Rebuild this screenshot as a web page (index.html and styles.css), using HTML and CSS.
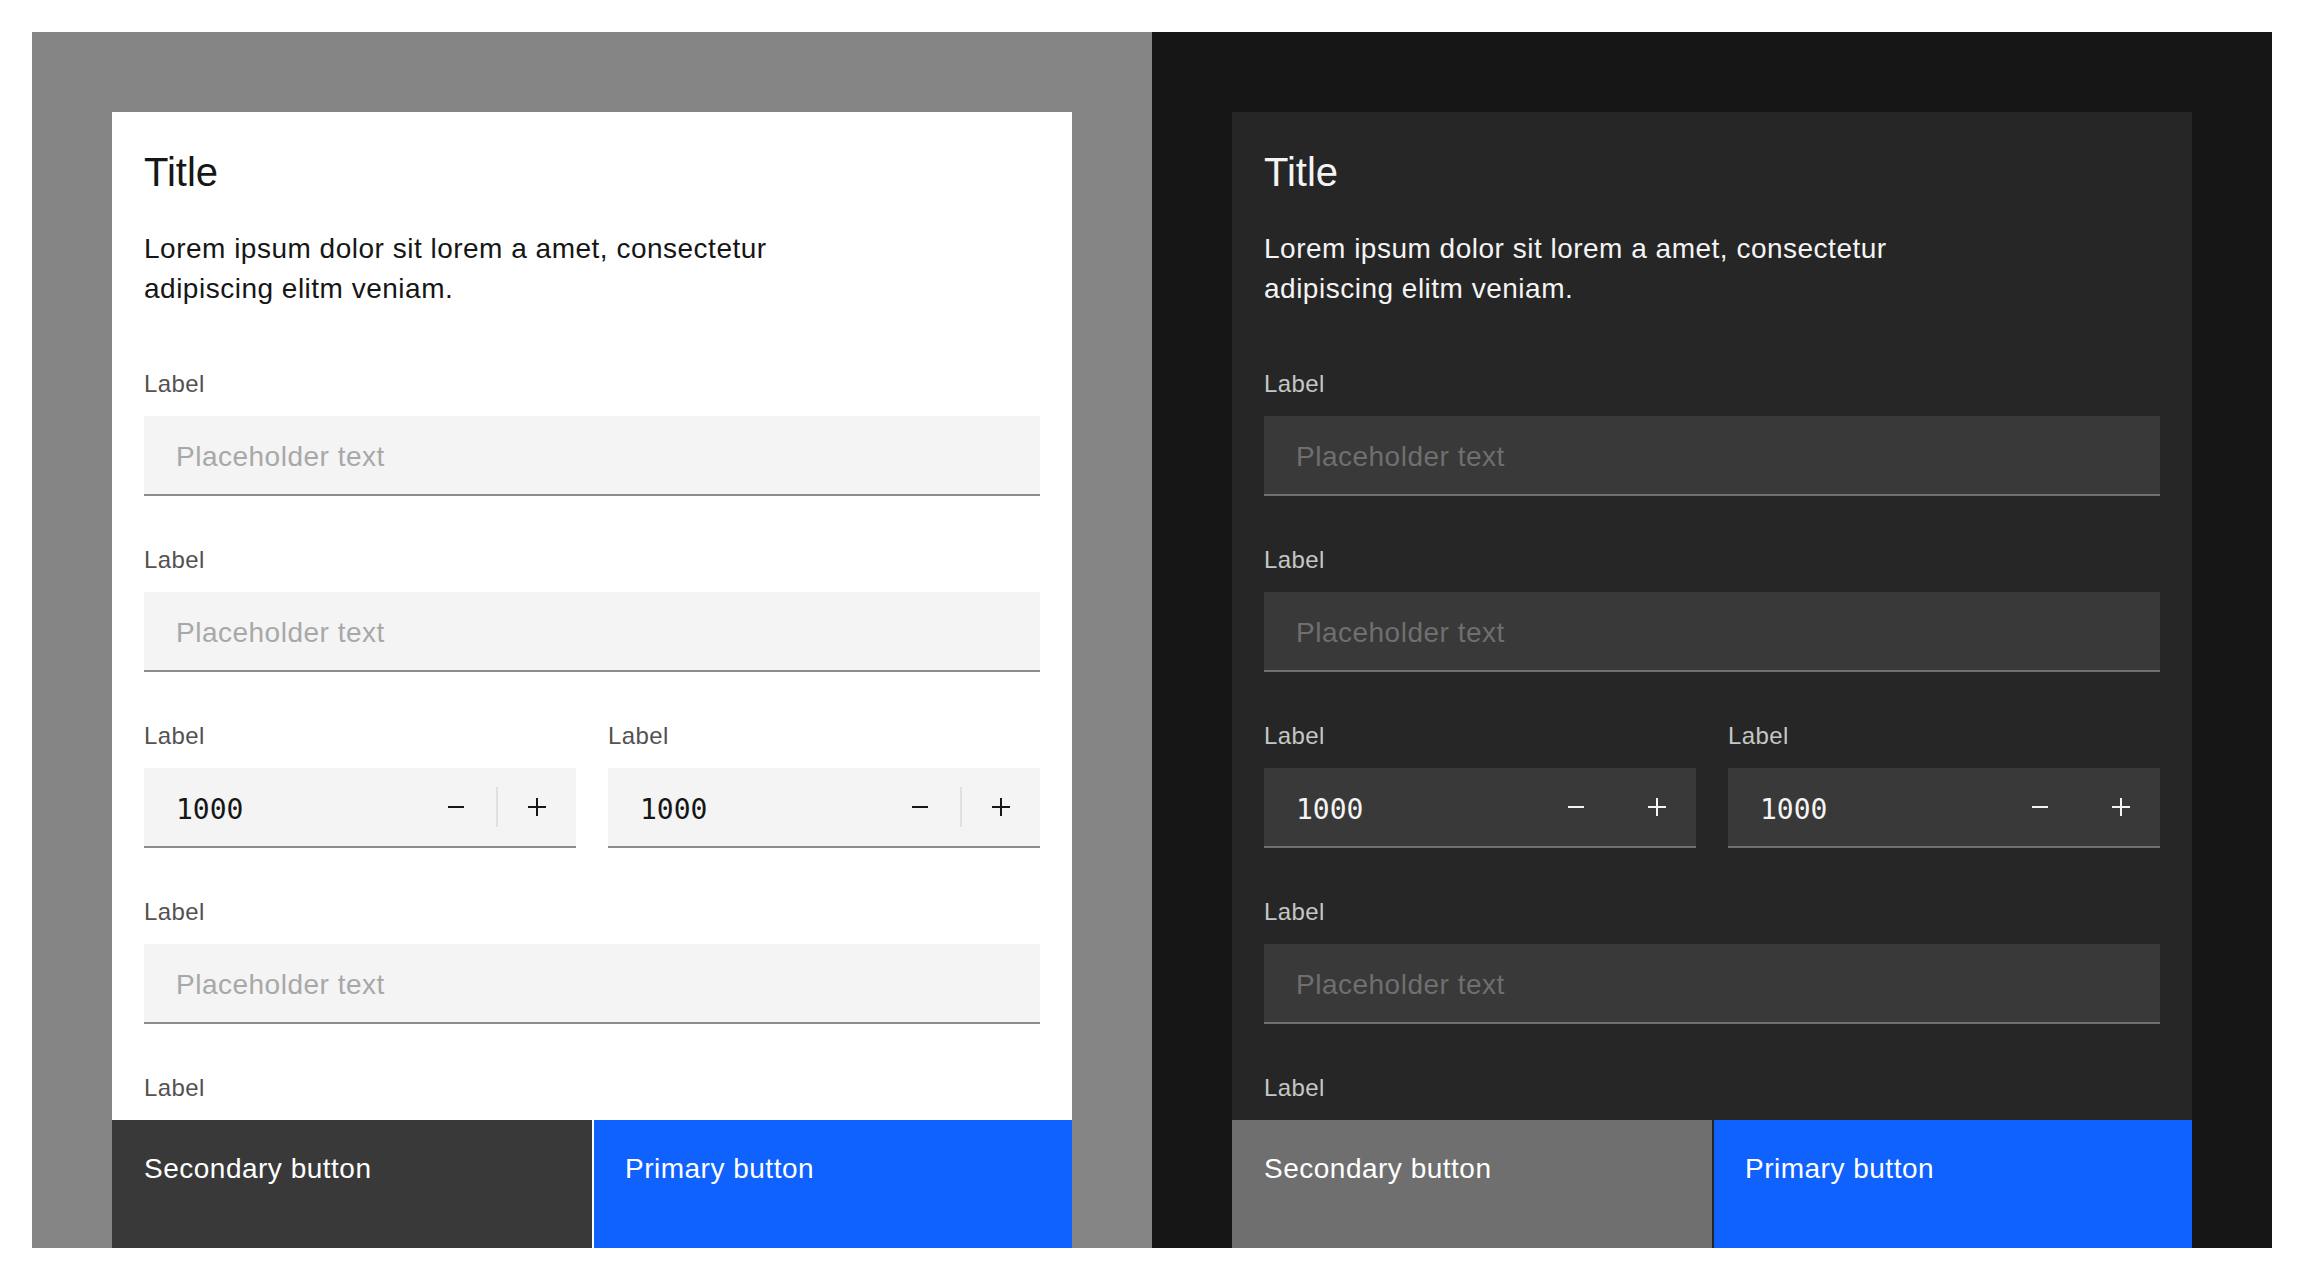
FILE: index.html
```html
<!DOCTYPE html>
<html lang="en">
<head>
<meta charset="utf-8">
<title>Modal form</title>
<link rel="stylesheet" href="styles.css">
</head>
<body>
  <section class="panel theme-light">
    <div class="modal">
      <header class="modal-header"><h2 class="modal-title">Title</h2></header>
      <div class="modal-content">
        <p class="modal-body">Lorem ipsum dolor sit lorem a amet, consectetur adipiscing elitm veniam.</p>
        <div class="field">
          <label class="label">Label</label>
          <input class="text-input" type="text" placeholder="Placeholder text">
        </div>
        <div class="field">
          <label class="label">Label</label>
          <input class="text-input" type="text" placeholder="Placeholder text">
        </div>
        <div class="field-row">
          <div class="field">
            <label class="label">Label</label>
            <div class="number">
              <input class="number-value" type="text" value="1000">
              <button class="step" aria-label="Decrement"><svg viewBox="0 0 32 32" width="32" height="32"><path d="M8 15h16v2H8z"/></svg></button>
              <span class="divider"></span>
              <button class="step step-plus" aria-label="Increment"><svg viewBox="0 0 32 32" width="32" height="32"><path d="M15 7h2v8h8v2h-8v8h-2v-8H7v-2h8z"/></svg></button>
            </div>
          </div>
          <div class="field">
            <label class="label">Label</label>
            <div class="number">
              <input class="number-value" type="text" value="1000">
              <button class="step" aria-label="Decrement"><svg viewBox="0 0 32 32" width="32" height="32"><path d="M8 15h16v2H8z"/></svg></button>
              <span class="divider"></span>
              <button class="step step-plus" aria-label="Increment"><svg viewBox="0 0 32 32" width="32" height="32"><path d="M15 7h2v8h8v2h-8v8h-2v-8H7v-2h8z"/></svg></button>
            </div>
          </div>
        </div>
        <div class="field">
          <label class="label">Label</label>
          <input class="text-input" type="text" placeholder="Placeholder text">
        </div>
        <div class="field">
          <label class="label">Label</label>
          <input class="text-input" type="text" placeholder="Placeholder text">
        </div>
      </div>
      <footer class="modal-footer">
        <button class="btn btn-secondary">Secondary button</button>
        <button class="btn btn-primary">Primary button</button>
      </footer>
    </div>
  </section>

  <section class="panel theme-dark">
    <div class="modal">
      <header class="modal-header"><h2 class="modal-title">Title</h2></header>
      <div class="modal-content">
        <p class="modal-body">Lorem ipsum dolor sit lorem a amet, consectetur adipiscing elitm veniam.</p>
        <div class="field">
          <label class="label">Label</label>
          <input class="text-input" type="text" placeholder="Placeholder text">
        </div>
        <div class="field">
          <label class="label">Label</label>
          <input class="text-input" type="text" placeholder="Placeholder text">
        </div>
        <div class="field-row">
          <div class="field">
            <label class="label">Label</label>
            <div class="number">
              <input class="number-value" type="text" value="1000">
              <button class="step" aria-label="Decrement"><svg viewBox="0 0 32 32" width="32" height="32"><path d="M8 15h16v2H8z"/></svg></button>
              <span class="divider"></span>
              <button class="step step-plus" aria-label="Increment"><svg viewBox="0 0 32 32" width="32" height="32"><path d="M15 7h2v8h8v2h-8v8h-2v-8H7v-2h8z"/></svg></button>
            </div>
          </div>
          <div class="field">
            <label class="label">Label</label>
            <div class="number">
              <input class="number-value" type="text" value="1000">
              <button class="step" aria-label="Decrement"><svg viewBox="0 0 32 32" width="32" height="32"><path d="M8 15h16v2H8z"/></svg></button>
              <span class="divider"></span>
              <button class="step step-plus" aria-label="Increment"><svg viewBox="0 0 32 32" width="32" height="32"><path d="M15 7h2v8h8v2h-8v8h-2v-8H7v-2h8z"/></svg></button>
            </div>
          </div>
        </div>
        <div class="field">
          <label class="label">Label</label>
          <input class="text-input" type="text" placeholder="Placeholder text">
        </div>
        <div class="field">
          <label class="label">Label</label>
          <input class="text-input" type="text" placeholder="Placeholder text">
        </div>
      </div>
      <footer class="modal-footer">
        <button class="btn btn-secondary">Secondary button</button>
        <button class="btn btn-primary">Primary button</button>
      </footer>
    </div>
  </section>
</body>
</html>
```

FILE: styles.css
```css
* { box-sizing: border-box; }

html, body { background: #ffffff; }

body {
  margin: 32px;
  display: flex;
  font-family: "Liberation Sans", Arial, sans-serif;
}

.panel {
  width: 1120px;
  height: 1216px;
  padding: 80px 80px 0 80px;
  flex: none;
}

.modal {
  height: 100%;
  display: flex;
  flex-direction: column;
  overflow: hidden;
}

.modal-header {
  padding: 32px 32px 0 32px;
  flex: none;
}

.modal-title {
  margin: 0;
  font-size: 40px;
  line-height: 56px;
  font-weight: 400;
}

.modal-content {
  flex: 1;
  min-height: 0;
  overflow: hidden;
  padding: 29px 32px 0 32px;
}

.modal-body {
  margin: 0 0 59px 0;
  max-width: 716px;
  font-size: 28px;
  line-height: 40px;
  letter-spacing: 0.5px;
}

.field {
  display: flex;
  flex-direction: column;
  min-width: 0;
  margin-bottom: 48px;
}

.field-row {
  display: grid;
  grid-template-columns: minmax(0, 1fr) minmax(0, 1fr);
  column-gap: 32px;
}

.label {
  font-size: 24px;
  line-height: 32px;
  letter-spacing: 0.4px;
  margin-bottom: 16px;
}

.text-input {
  display: block;
  width: 100%;
  height: 80px;
  border: none;
  border-bottom: 2px solid;
  outline: none;
  border-radius: 0;
  padding: 4px 32px 0 32px;
  font-family: "Liberation Sans", Arial, sans-serif;
  font-size: 28px;
  letter-spacing: 0.5px;
}

.number {
  display: flex;
  align-items: center;
  width: 100%;
  height: 80px;
  border-bottom: 2px solid;
}

.number-value {
  flex: 1 1 0;
  width: 0;
  min-width: 0;
  height: 100%;
  border: none;
  outline: none;
  background: transparent;
  padding: 4px 0 0 32px;
  font-family: "DejaVu Sans Mono", "Liberation Mono", monospace;
  font-size: 28px;
}

.step {
  flex: none;
  width: 80px;
  height: 78px;
  border: none;
  background: transparent;
  padding: 0;
  display: flex;
  align-items: center;
  justify-content: center;
}

.step-plus { width: 78px; }

.step svg { display: block; }

.divider {
  flex: none;
  width: 2px;
  height: 40px;
}

.modal-footer {
  flex: none;
  height: 128px;
  display: flex;
  gap: 2px;
}

.btn {
  flex: 1;
  border: none;
  margin: 0;
  text-align: left;
  padding: 31px 32px 0 32px;
  display: flex;
  align-items: flex-start;
  font-family: "Liberation Sans", Arial, sans-serif;
  font-size: 28px;
  line-height: 36px;
  letter-spacing: 0.5px;
  color: #ffffff;
}

.btn-secondary { flex: 0 0 480px; }

.btn-primary { background: #0f62fe; padding-left: 31px; }

/* Light theme */
.theme-light { background: #858585; }
.theme-light .modal { background: #ffffff; color: #161616; }
.theme-light .label { color: #525252; }
.theme-light .text-input,
.theme-light .number { background: #f4f4f4; border-bottom-color: #8d8d8d; color: #161616; }
.theme-light .text-input::placeholder { color: #a8a8a8; opacity: 1; }
.theme-light .number-value { color: #161616; }
.theme-light .step svg { fill: #161616; }
.theme-light .divider { background: #e0e0e0; }
.theme-light .btn-secondary { background: #393939; }

/* Dark theme */
.theme-dark { background: #161616; }
.theme-dark .modal { background: #262626; color: #f4f4f4; }
.theme-dark .label { color: #c6c6c6; }
.theme-dark .text-input,
.theme-dark .number { background: #393939; border-bottom-color: #6f6f6f; color: #f4f4f4; }
.theme-dark .text-input::placeholder { color: #6f6f6f; opacity: 1; }
.theme-dark .number-value { color: #f4f4f4; }
.theme-dark .step svg { fill: #f4f4f4; }
.theme-dark .divider { background: transparent; }
.theme-dark .btn-secondary { background: #6f6f6f; }
```
